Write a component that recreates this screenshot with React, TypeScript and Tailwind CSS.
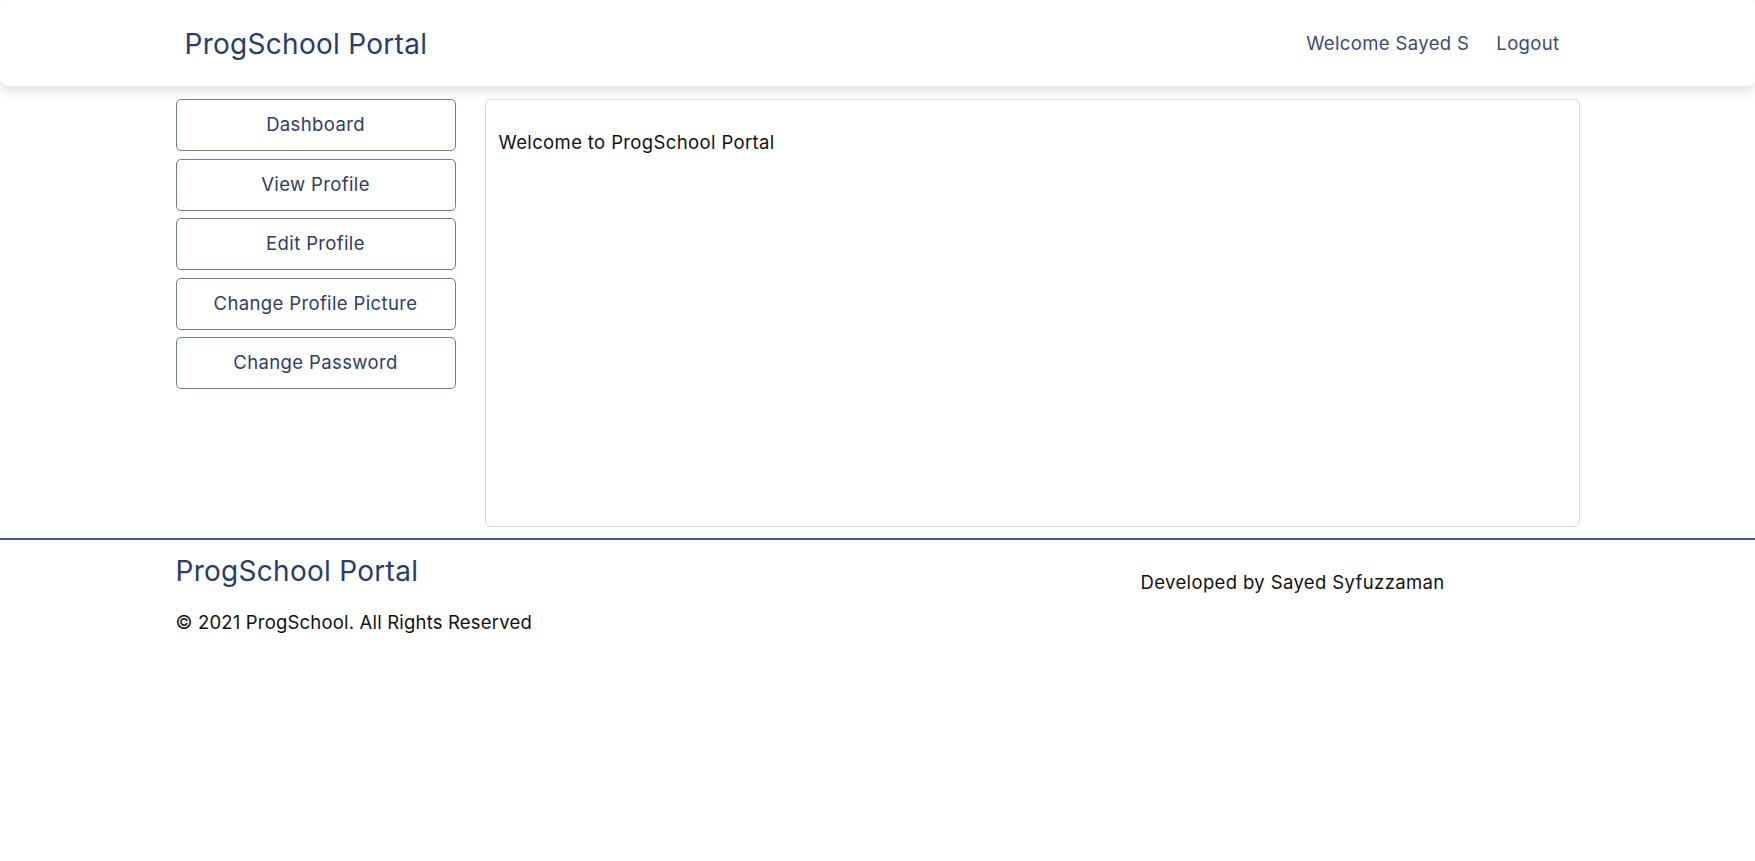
const MENU = [
  "Dashboard",
  "View Profile",
  "Edit Profile",
  "Change Profile Picture",
  "Change Password",
];

export default function App() {
  return (
    <div className="min-h-screen bg-white font-['Inter',sans-serif] text-[18.5px] tracking-[0.02em] text-[#111]">
      {/* Header */}
      <header className="h-[86px] rounded-lg bg-white shadow-[0_5px_12px_rgba(0,0,0,0.13)]">
        <div className="mx-auto flex h-full w-[80%] items-center justify-between pl-[9px] pr-[20px] pt-[2px]">
          <span className="text-[28px] tracking-[0.01em] text-[#2b3c6c]">ProgSchool Portal</span>
          <nav className="flex items-center gap-[27px] text-[#3a4a7c]">
            <a href="#">Welcome Sayed S</a>
            <a href="#">Logout</a>
          </nav>
        </div>
      </header>

      {/* Main */}
      <main className="mx-auto mt-[13px] flex w-[80%] gap-[29px]">
        <aside className="flex w-[280px] shrink-0 flex-col gap-[7.5px]">
          {MENU.map((item) => (
            <button
              key={item}
              className="h-[52px] rounded-[5px] border border-[#6f7da0] bg-white tracking-[0.02em] text-[#2e3d68]"
            >
              {item}
            </button>
          ))}
        </aside>
        <section className="h-[428px] flex-1 rounded-md border border-[#dadada] px-[13px] pt-[29px]">
          Welcome to ProgSchool Portal
        </section>
      </main>

      {/* Footer */}
      <div className="mt-[11px] border-t-2 border-[#44558a]" />
      <footer className="mx-auto flex w-[80%] pt-[13px]">
        <div className="w-[965px]">
          <p className="text-[28px] leading-9 tracking-[0.01em] text-[#2b3c6c]">ProgSchool Portal</p>
          <p className="mt-[19px] leading-7 tracking-[0.01em]">© 2021 ProgSchool. All Rights Reserved</p>
        </div>
        <p className="pt-[15px] leading-7">Developed by Sayed Syfuzzaman</p>
      </footer>
    </div>
  );
}
